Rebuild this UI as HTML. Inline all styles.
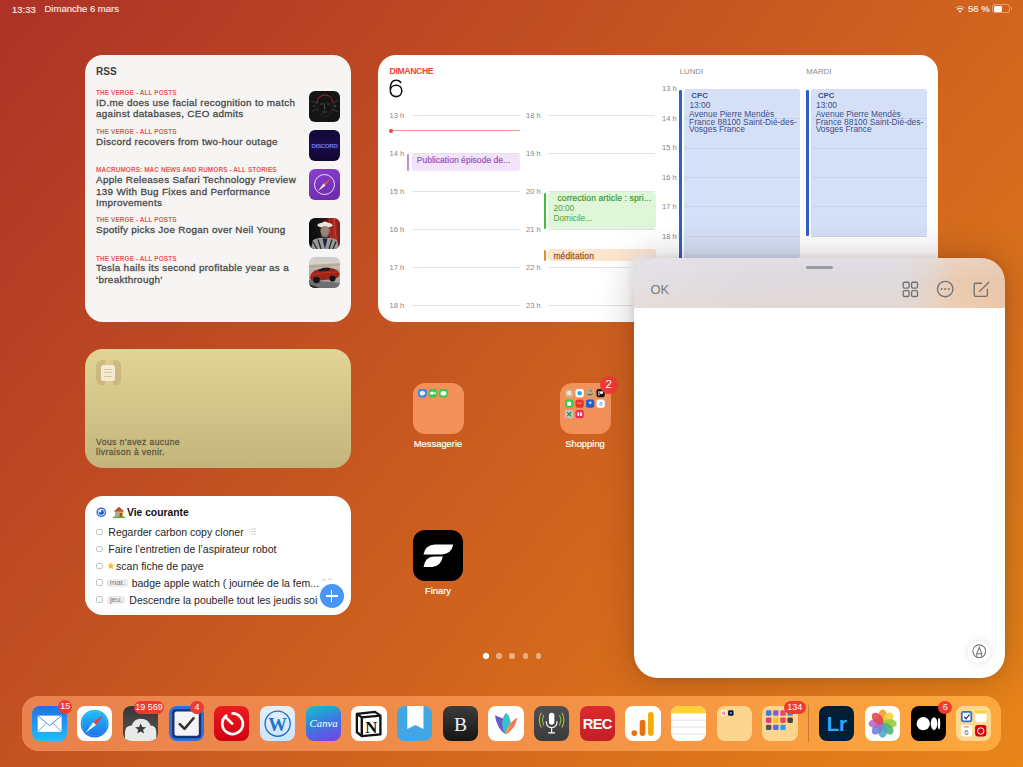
<!DOCTYPE html>
<html><head><meta charset="utf-8">
<style>
*{box-sizing:border-box;margin:0;padding:0}
html,body{width:1023px;height:767px;overflow:hidden}
body{position:relative;font-family:"Liberation Sans",sans-serif;
background:linear-gradient(130deg,rgb(173,50,39) 0%,rgb(231,133,24) 100%);}
.a{position:absolute;line-height:1;white-space:nowrap}
.w{position:absolute;border-radius:18px;overflow:hidden}
.src{left:11px;font-size:6.4px;font-weight:bold;color:#e25b5b;letter-spacing:.12px}
.ttl{left:11px;font-size:9.9px;color:#4a4a4a;line-height:11.4px;letter-spacing:.3px;-webkit-text-stroke:.3px #4a4a4a}
.cb{position:absolute;left:11.1px;width:6.7px;height:6.5px;border:1px solid #c4c4c4;border-radius:1.8px}
.tt{font-size:10.5px;color:#1e1e1e}
.tag{position:absolute;height:8.5px;border-radius:2px;background:#ececee;color:#7d7d7d;font-size:8px;line-height:8.5px;text-align:center;letter-spacing:-.1px}
.lbl{position:absolute;font-size:9.4px;color:#fff;-webkit-text-stroke:.2px #fff;line-height:1;white-space:nowrap;text-align:center;width:80px}
.ic{position:absolute;top:706px;width:35.3px;height:35.3px;border-radius:8px;overflow:hidden}
.bd{position:absolute;height:13.2px;border-radius:7px;background:#f2392f;color:#fff;font-size:9px;line-height:13.2px;text-align:center;white-space:nowrap}
.th{position:absolute;left:224px;width:31px;height:31px;border-radius:6px;overflow:hidden}
</style></head><body>

<!-- status bar -->
<div class="a" style="left:12px;top:4.6px;font-size:9.5px;color:#fbe9e2;-webkit-text-stroke:.15px #fbe9e2">13:33</div>
<div class="a" style="left:44.5px;top:4.2px;font-size:9.5px;color:#fbe9e2;-webkit-text-stroke:.15px #fbe9e2">Dimanche 6 mars</div>
<div class="a" style="left:968px;top:4.4px;font-size:9.5px;color:#fbe9e2;-webkit-text-stroke:.2px #fbe9e2">56 %</div>

<svg style="position:absolute;left:954.5px;top:5px" width="10" height="8" viewBox="0 0 10 8"><path d="M5 7.8 L3.4 5.9 Q5 4.6 6.6 5.9 Z" fill="#fbe9e2"/><path d="M2.1 4.5 Q5 2.2 7.9 4.5" fill="none" stroke="#fbe9e2" stroke-width="1.2"/><path d="M.6 2.9 Q5 -.6 9.4 2.9" fill="none" stroke="rgba(251,233,226,.45)" stroke-width="1.2"/></svg>
<div style="position:absolute;left:992px;top:4.3px;width:18.3px;height:9.2px;border-radius:2.6px;border:1px solid rgba(251,233,226,.45)"></div>
<div style="position:absolute;left:993.8px;top:6px;width:8.4px;height:5.8px;border-radius:1.2px;background:#fff"></div>
<div style="position:absolute;left:1010.8px;top:7.3px;width:1.2px;height:3.2px;border-radius:0 1px 1px 0;background:rgba(251,233,226,.45)"></div>

<!-- RSS widget -->
<div class="w" id="rss" style="left:85px;top:55px;width:266px;height:267px;background:#f6f5f3">
  <div class="a" style="left:11px;top:11.5px;font-size:10px;font-weight:bold;color:#3d3d3d">RSS</div>
  <div class="a src" style="top:34.6px">THE VERGE - ALL POSTS</div>
  <div class="a ttl" style="top:41.9px">ID.me does use facial recognition to match<br>against databases, CEO admits</div>
  <div class="a src" style="top:73.5px">THE VERGE - ALL POSTS</div>
  <div class="a ttl" style="top:80.8px">Discord recovers from two-hour outage</div>
  <div class="a src" style="top:112.3px">MACRUMORS: MAC NEWS AND RUMORS - ALL STORIES</div>
  <div class="a ttl" style="top:119.4px">Apple Releases Safari Technology Preview<br>139 With Bug Fixes and Performance<br>Improvements</div>
  <div class="a src" style="top:161.5px">THE VERGE - ALL POSTS</div>
  <div class="a ttl" style="top:168.6px">Spotify picks Joe Rogan over Neil Young</div>
  <div class="a src" style="top:201.2px">THE VERGE - ALL POSTS</div>
  <div class="a ttl" style="top:207.2px">Tesla hails its second profitable year as a<br>‘breakthrough’</div>
  <div class="th" style="top:36px;background:#151515"><svg width="31" height="31" viewBox="0 0 31 31"><path d="M8 12 Q9 4 16 4 Q23 4 24 12" fill="none" stroke="#b02a2a" stroke-width=".9"/><path d="M8 12 Q8 20 12 24 Q16 27 20 24 Q24 20 24 12" fill="none" stroke="#555" stroke-width=".6" stroke-dasharray="1 1"/><path d="M11 13 h3 M18 13 h3 M15.5 12 v7 M13 21 h5" stroke="#6a6a6a" stroke-width=".6"/><path d="M2 10 L8 12 M24 12 L30 9 M3 20 L9 18 M23 18 L29 21" stroke="#4a5a6a" stroke-width=".5"/><circle cx="26" cy="15" r=".8" fill="#5a7aa0"/><circle cx="5" cy="15" r=".8" fill="#a03030"/></svg></div>
  <div class="th" style="top:75px;background:linear-gradient(180deg,#12093a,#1b0c4a 50%,#120830)"><div class="a" style="left:0;top:12.5px;width:31px;text-align:center;font-size:6.2px;font-weight:bold;color:#6a78f0;letter-spacing:-.35px">DISCORD</div></div>
  <div class="th" style="top:113.5px;background:linear-gradient(160deg,#8b3fd0,#6a2aa8)"><svg width="31" height="31" viewBox="0 0 31 31"><circle cx="15.5" cy="15.5" r="10" fill="none" stroke="#e8dcf5" stroke-width="1"/><path d="M22 9 L16.5 16.5 L14.5 14.5 Z" fill="#e84a3a"/><path d="M9 22 L14.5 14.5 L16.5 16.5 Z" fill="#f3f0f5"/></svg></div>
  <div class="th" style="top:162.5px;background:linear-gradient(90deg,#0c0c0c 0%,#151515 35%,#6a1010 60%,#b02a20 80%,#7a1a18 100%)"><svg width="31" height="31" viewBox="0 0 31 31"><path d="M20 0 L23 31 M25 0 L28 31" stroke="#d04a3a" stroke-width="1.2" opacity=".6"/><ellipse cx="16" cy="7.2" rx="7.5" ry="2.6" fill="#e6e2da"/><path d="M11.5 6.5 Q16 0.5 20.5 6.5 Z" fill="#ece8e0"/><ellipse cx="16" cy="13" rx="4.6" ry="5" fill="#9a8478"/><path d="M12 14 Q16 21 20 14 L19.5 18 Q16 20.5 12.5 18 Z" fill="#7a7a7a"/><path d="M2 31 L4 22 Q10 19 16 20 Q22 19 28 22 L30 31 Z" fill="#9a9a9a"/><path d="M4 24 L8 31 M9 21.5 L12 31 M23 21.5 L20 31 M27 23.5 L24 31" stroke="#2a2a2a" stroke-width="1.3"/><path d="M13.5 20.5 L16 31 L18.5 20.5 Z" fill="#1a2540"/></svg></div>
  <div class="th" style="top:201.5px;background:linear-gradient(180deg,#c8ccd0 0%,#d8d2c4 22%,#b8b4ac 40%,#9a9a9a 100%)"><svg width="31" height="31" viewBox="0 0 31 31"><path d="M0 8 L31 6 L31 9 L0 11 Z" fill="#a89a80" opacity=".6"/><path d="M0 23 L0 31 L31 31 L31 26 Z" fill="#6f6f6f"/><path d="M1 20 Q2 14 9 12.5 Q17 10.5 24 11.5 Q30 13 30.5 17 Q30.5 21 25 22 L5 24 Q1 23.5 1 20 Z" fill="#9c2418"/><path d="M9 13 Q15 9.5 22 11 L20 13.5 L10.5 14.5 Z" fill="#1c1c22"/><path d="M2 18 Q12 15.5 29 15" stroke="#c83a2a" stroke-width=".8" fill="none"/><circle cx="7.5" cy="23" r="3.3" fill="#151515"/><circle cx="23.5" cy="21.5" r="3.1" fill="#151515"/><path d="M0 27 L10 31 L0 31 Z" fill="#222"/></svg></div>
</div>

<!-- Calendar widget -->
<div class="w" id="cal" style="left:378px;top:55px;width:560px;height:266.6px;background:#fff">
<div class="a" style="left:11.6px;top:12.2px;font-size:8.7px;font-weight:bold;color:#f0443a;letter-spacing:-.4px">DIMANCHE</div>
<svg style="position:absolute;left:11.4px;top:23.8px" width="14.5" height="19" viewBox="0 0 14.5 19"><path d="M12 4 Q10.8 1.2 7.1 1.2 C2.9 1.2 1.2 5 1.2 10.3 C1.2 15.2 3.5 17.6 7 17.6 C10.5 17.6 12.8 15.2 12.8 11.8 C12.8 8.5 10.5 6.3 7.1 6.3 C3.8 6.3 1.5 8.6 1.3 11.4" fill="none" stroke="#111" stroke-width="1.55"/></svg>
<div class="a" style="left:11.6px;top:56.5px;font-size:7.5px;color:#858585">13 h</div>
<div class="a" style="left:148.0px;top:56.5px;font-size:7.5px;color:#858585">18 h</div>
<div style="position:absolute;left:33.8px;top:59.8px;width:108.0px;height:1.0px;background:#e3e3e3"></div>
<div style="position:absolute;left:170.4px;top:59.8px;width:107.0px;height:1.0px;background:#e3e3e3"></div>
<div class="a" style="left:11.6px;top:94.5px;font-size:7.5px;color:#858585">14 h</div>
<div class="a" style="left:148.0px;top:94.5px;font-size:7.5px;color:#858585">19 h</div>
<div style="position:absolute;left:33.8px;top:97.8px;width:108.0px;height:1.0px;background:#e3e3e3"></div>
<div style="position:absolute;left:170.4px;top:97.8px;width:107.0px;height:1.0px;background:#e3e3e3"></div>
<div class="a" style="left:11.6px;top:132.5px;font-size:7.5px;color:#858585">15 h</div>
<div class="a" style="left:148.0px;top:132.5px;font-size:7.5px;color:#858585">20 h</div>
<div style="position:absolute;left:33.8px;top:135.8px;width:108.0px;height:1.0px;background:#e3e3e3"></div>
<div style="position:absolute;left:170.4px;top:135.8px;width:107.0px;height:1.0px;background:#e3e3e3"></div>
<div class="a" style="left:11.6px;top:170.7px;font-size:7.5px;color:#858585">16 h</div>
<div class="a" style="left:148.0px;top:170.7px;font-size:7.5px;color:#858585">21 h</div>
<div style="position:absolute;left:33.8px;top:174.0px;width:108.0px;height:1.0px;background:#e3e3e3"></div>
<div style="position:absolute;left:170.4px;top:174.0px;width:107.0px;height:1.0px;background:#e3e3e3"></div>
<div class="a" style="left:11.6px;top:208.7px;font-size:7.5px;color:#858585">17 h</div>
<div class="a" style="left:148.0px;top:208.7px;font-size:7.5px;color:#858585">22 h</div>
<div style="position:absolute;left:33.8px;top:212.0px;width:108.0px;height:1.0px;background:#e3e3e3"></div>
<div style="position:absolute;left:170.4px;top:212.0px;width:107.0px;height:1.0px;background:#e3e3e3"></div>
<div class="a" style="left:11.6px;top:246.7px;font-size:7.5px;color:#858585">18 h</div>
<div class="a" style="left:148.0px;top:246.7px;font-size:7.5px;color:#858585">23 h</div>
<div style="position:absolute;left:33.8px;top:250.0px;width:108.0px;height:1.0px;background:#e3e3e3"></div>
<div style="position:absolute;left:170.4px;top:250.0px;width:107.0px;height:1.0px;background:#e3e3e3"></div>
<div style="position:absolute;left:13.0px;top:75.1px;width:129.0px;height:1.0px;background:#f5958f"></div>
<div style="position:absolute;left:11px;top:73.6px;width:4px;height:4px;border-radius:50%;background:#f0443a"></div>
<div style="position:absolute;left:33.7px;top:98.8px;width:108.0px;height:17.5px;background:#f3e3f8;border-radius:3px"></div>
<div style="position:absolute;left:29.0px;top:99.1px;width:2.4px;height:17.0px;background:#c08ad8;border-radius:1.2px"></div>
<div class="a" style="left:38.7px;top:100.5px;font-size:8.5px;color:#9a52b8;letter-spacing:.04px;-webkit-text-stroke:.2px #9a52b8">Publication épisode de...</div>
<div style="position:absolute;left:169.9px;top:136.7px;width:107.7px;height:37.4px;background:#e0f6d9;border-radius:3px"></div>
<div style="position:absolute;left:165.5px;top:137.5px;width:2.6px;height:36.0px;background:#3cbf3c;border-radius:1.3px"></div>
<div class="a" style="left:179.4px;top:139.0px;font-size:8.5px;color:#3d9b30;letter-spacing:.13px;-webkit-text-stroke:.2px #3d9b30">correction article : spri...</div>
<div class="a" style="left:175.4px;top:149.3px;font-size:8.3px;color:#4aa63a">20:00</div>
<div class="a" style="left:175.4px;top:158.5px;font-size:8.3px;color:#4aa63a">Domicile...</div>
<div style="position:absolute;left:169.9px;top:193.9px;width:107.7px;height:12.5px;background:#fce6d0;border-radius:3px"></div>
<div style="position:absolute;left:165.5px;top:194.6px;width:2.6px;height:11.8px;background:#f08a1e;border-radius:1.3px"></div>
<div class="a" style="left:175.4px;top:196.8px;font-size:8.5px;color:#a0602e;letter-spacing:.14px;-webkit-text-stroke:.3px #a0602e">méditation</div>
<div class="a" style="left:301.7px;top:12.8px;font-size:7.8px;color:#8a8a8a">LUNDI</div>
<div class="a" style="left:428.2px;top:12.8px;font-size:7.8px;color:#8a8a8a">MARDI</div>
<div class="a" style="left:284.0px;top:30.4px;font-size:7.5px;color:#858585">13 h</div>
<div class="a" style="left:284.0px;top:59.8px;font-size:7.5px;color:#858585">14 h</div>
<div class="a" style="left:284.0px;top:89.4px;font-size:7.5px;color:#858585">15 h</div>
<div class="a" style="left:284.0px;top:118.6px;font-size:7.5px;color:#858585">16 h</div>
<div class="a" style="left:284.0px;top:148.2px;font-size:7.5px;color:#858585">17 h</div>
<div class="a" style="left:284.0px;top:177.8px;font-size:7.5px;color:#858585">18 h</div>
<div style="position:absolute;left:306.0px;top:34.0px;width:115.8px;height:169.0px;background:#d5e0f6;border-radius:2.5px"></div>
<div style="position:absolute;left:432.6px;top:34.0px;width:116.8px;height:147.0px;background:#d5e0f6;border-radius:2.5px"></div>
<div style="position:absolute;left:306.0px;top:63.4px;width:115.8px;height:1.0px;background:#c9d4ec"></div>
<div style="position:absolute;left:432.6px;top:63.4px;width:116.8px;height:1.0px;background:#c9d4ec"></div>
<div style="position:absolute;left:306.0px;top:92.8px;width:115.8px;height:1.0px;background:#c9d4ec"></div>
<div style="position:absolute;left:432.6px;top:92.8px;width:116.8px;height:1.0px;background:#c9d4ec"></div>
<div style="position:absolute;left:306.0px;top:122.0px;width:115.8px;height:1.0px;background:#c9d4ec"></div>
<div style="position:absolute;left:432.6px;top:122.0px;width:116.8px;height:1.0px;background:#c9d4ec"></div>
<div style="position:absolute;left:306.0px;top:151.4px;width:115.8px;height:1.0px;background:#c9d4ec"></div>
<div style="position:absolute;left:432.6px;top:151.4px;width:116.8px;height:1.0px;background:#c9d4ec"></div>
<div style="position:absolute;left:306.0px;top:181.0px;width:115.8px;height:1.0px;background:#c9d4ec"></div>
<div style="position:absolute;left:432.6px;top:181.0px;width:116.8px;height:1.0px;background:#c9d4ec"></div>
<div style="position:absolute;left:301.3px;top:34.5px;width:2.6px;height:169.0px;background:#2f5fcc;border-radius:1.3px"></div>
<div style="position:absolute;left:428.2px;top:34.5px;width:2.6px;height:146.0px;background:#2f5fcc;border-radius:1.3px"></div>
<div class="a" style="left:313.3px;top:36.7px;font-size:7.8px;font-weight:bold;color:#3a4f8a">CPC</div>
<div class="a" style="left:311.4px;top:45.6px;font-size:8.4px;color:#3a4f8a">13:00</div>
<div class="a" style="left:311.1px;top:56.2px;font-size:8.4px;color:#3a4f8a;line-height:7.6px;letter-spacing:0px">Avenue Pierre Mendès<br>France 88100 Saint-Dié-des-<br>Vosges France</div>
<div class="a" style="left:439.9px;top:36.7px;font-size:7.8px;font-weight:bold;color:#3a4f8a">CPC</div>
<div class="a" style="left:438.0px;top:45.6px;font-size:8.4px;color:#3a4f8a">13:00</div>
<div class="a" style="left:437.7px;top:56.2px;font-size:8.4px;color:#3a4f8a;line-height:7.6px;letter-spacing:0px">Avenue Pierre Mendès<br>France 88100 Saint-Dié-des-<br>Vosges France</div>
</div>

<!-- Delivery widget -->
<div class="w" id="dl" style="left:85px;top:349px;width:266px;height:119px;background:linear-gradient(180deg,#e1d494 0%,#d3c588 50%,#c3b47c 100%)">
  <div style="position:absolute;left:11px;top:11px;width:25px;height:25px;border-radius:6px;background:#cbb97e"></div>
  <div style="position:absolute;left:19.5px;top:11px;width:8px;height:25px;background:#dccb8c"></div>
  <div style="position:absolute;left:15.8px;top:16px;width:14.5px;height:15.7px;border-radius:2.5px;background:#f4e9d2"></div>
  <div style="position:absolute;left:18.5px;top:19.5px;width:8px;height:1.2px;background:#d8c49a;box-shadow:0 3px 0 #d8c49a,0 7px 0 #d8c49a"></div>
  <div class="a" style="left:11.1px;top:88.1px;font-size:8.6px;color:#615a3f;line-height:10.2px;letter-spacing:.39px;-webkit-text-stroke:.3px #615a3f">Vous n’avez aucune<br>livraison à venir.</div>
</div>

<!-- Todo widget -->
<div class="w" id="todo" style="left:85px;top:496px;width:266px;height:119px;background:#fff">
  <svg style="position:absolute;left:10.6px;top:11.1px" width="10.5" height="10.5" viewBox="0 0 10 10"><circle cx="5" cy="5" r="4.6" fill="#3d74dc"/><circle cx="5" cy="5" r="3.2" fill="#fff"/><circle cx="5" cy="5" r="2.5" fill="#2356b8"/><path d="M5 5 L5 2.5 A2.5 2.5 0 0 0 2.5 5 Z" fill="#fff"/></svg>
  <svg style="position:absolute;left:27.9px;top:10px" width="12" height="12" viewBox="0 0 12 12"><path d="M6 .8 L11.2 5.6 L10 5.6 L10 11 L2 11 L2 5.6 L.8 5.6 Z" fill="#e8a25a"/><path d="M6 .8 L11.2 5.6 L.8 5.6 Z" fill="#b8503a"/><rect x="3" y="7" width="2.4" height="2.4" fill="#6fb6e8"/><rect x="6.6" y="7" width="2.4" height="4" fill="#8a5a3a"/><rect x="0" y="10.6" width="12" height="1.4" fill="#5aa840"/></svg>
  <div class="a" style="left:42px;top:11.7px;font-size:10.3px;font-weight:bold;color:#111">Vie courante</div>
  <div class="cb" style="top:32.7px"></div><div class="a tt" style="left:23.3px;top:31.0px">Regarder carbon copy cloner</div>
  <svg style="position:absolute;left:164px;top:32px" width="7" height="7" viewBox="0 0 7 7"><path d="M0 1h1M2 1h5M0 3.5h1M2 3.5h5M0 6h1M2 6h5" stroke="#c9c9c9" stroke-width=".8"/></svg>
  <div class="cb" style="top:49.6px"></div><div class="a tt" style="left:23.3px;top:47.9px">Faire l’entretien de l’aspirateur robot</div>
  <div class="cb" style="top:66.5px"></div>
  <svg style="position:absolute;left:22.4px;top:66.3px" width="7.6" height="7.6" viewBox="0 0 10 10"><path d="M5 .3 L6.4 3.4 L9.8 3.7 L7.2 6 L8 9.5 L5 7.7 L2 9.5 L2.8 6 L.2 3.7 L3.6 3.4 Z" fill="#f5c02a"/></svg>
  <div class="a tt" style="left:31.1px;top:64.8px">scan fiche de paye</div>
  <div class="cb" style="top:83.4px"></div>
  <div class="tag" style="left:21.9px;top:82.7px;width:20.8px">mar.</div>
  <div class="a tt" style="left:46.7px;top:81.7px;width:187px;overflow:hidden;padding-bottom:3px">badge apple watch ( journée de la fem...</div>
  <svg style="position:absolute;left:236px;top:80px" width="12" height="6" viewBox="0 0 12 6"><path d="M1 5 Q3 1 5 5 M7 4 Q9 1 11 4" stroke="#c8c8c8" stroke-width="1" fill="none"/></svg>
  <div class="cb" style="top:100.3px"></div>
  <div class="tag" style="left:21.9px;top:99.6px;width:18.5px">jeu.</div>
  <div class="a tt" style="left:44.3px;top:98.6px;width:189px;overflow:hidden;padding-bottom:3px">Descendre la poubelle tout les jeudis soir</div>
  <div style="position:absolute;left:234.8px;top:88px;width:23.8px;height:23.8px;border-radius:50%;background:#4a96f4"></div>
  <div style="position:absolute;left:240.8px;top:99.1px;width:11.8px;height:1.6px;background:#fff"></div>
  <div style="position:absolute;left:245.9px;top:94px;width:1.6px;height:11.8px;background:#fff"></div>
</div>


<!-- home icons -->
<div style="position:absolute;left:412.5px;top:383.3px;width:51px;height:51.2px;border-radius:12px;background:#f4905a"></div>
<svg style="position:absolute;left:418px;top:389px" width="30" height="9" viewBox="0 0 30 9">
 <rect x="0" y="0" width="8.8" height="8.5" rx="2.4" fill="#3d83f2"/><ellipse cx="4.4" cy="4.2" rx="2.6" ry="2.3" fill="#fff"/>
 <rect x="10.6" y="0" width="8.5" height="8.5" rx="2.4" fill="#3cc84a"/><rect x="12.3" y="2.8" width="3.4" height="2.8" rx=".6" fill="#fff"/><path d="M15.7 4.2 L17.6 2.8 L17.6 5.6 Z" fill="#fff"/>
 <rect x="21.1" y="0" width="8.6" height="8.5" rx="2.4" fill="#3cc84a"/><ellipse cx="25.4" cy="4.2" rx="2.9" ry="2.3" fill="#fff"/>
</svg>
<div class="lbl" style="left:398px;top:439px">Messagerie</div>

<div style="position:absolute;left:560px;top:383.1px;width:50.6px;height:51.2px;border-radius:12px;background:#f4915a"></div>
<svg style="position:absolute;left:565px;top:388.8px" width="40.5" height="30" viewBox="0 0 40.5 30">
 <rect x="0" y="0" width="8.3" height="8.3" rx="2.2" fill="#cdb48a"/><rect x="2" y="2" width="4.3" height="4.3" rx="1" fill="#efe6d8"/>
 <rect x="10.5" y="0" width="8.3" height="8.3" rx="2.2" fill="#fff"/><rect x="12.6" y="2.2" width="4" height="4" rx="1" fill="#2aa4e8"/>
 <rect x="21" y="0" width="8.3" height="8.3" rx="2.2" fill="#c9a77a"/><path d="M22.5 5 Q25 7 27.8 5" stroke="#333" stroke-width=".8" fill="none"/><path d="M24 1 L26 3.2 L27 .8 Z" fill="#2a8ef0"/>
 <rect x="31.5" y="0" width="8.3" height="8.3" rx="2.2" fill="#111"/><circle cx="36.5" cy="3.6" r="1.6" fill="#fff"/><rect x="33.4" y="2" width="1" height="4.5" fill="#fff"/>
 <rect x="0" y="10.5" width="8.3" height="8.3" rx="2.2" fill="#3cc84a"/><rect x="2.3" y="12.7" width="3.8" height="4" fill="#fff"/>
 <rect x="10.5" y="10.5" width="8.3" height="8.3" rx="2.2" fill="#e2362a"/><path d="M12.3 13.5 Q14.6 16 17 13.5" stroke="#f7b27a" stroke-width=".8" fill="none"/>
 <rect x="21" y="10.5" width="8.3" height="8.3" rx="2.2" fill="#1f5fcf"/><path d="M25.2 12.3 v3 M23.7 13.8 h3" stroke="#fff" stroke-width=".8"/>
 <rect x="31.5" y="10.5" width="8.3" height="8.3" rx="2.2" fill="#fff"/><text x="35.6" y="17.3" font-size="6" fill="#3a9ef0" text-anchor="middle" font-family="Liberation Sans">8</text>
 <rect x="0" y="21" width="8.3" height="8.3" rx="2.2" fill="#c6c6c6"/><path d="M2 23 L6.3 27.3 M6.3 23 L2 27.3" stroke="#2e8a3a" stroke-width="1.1"/>
 <rect x="10.5" y="21" width="8.3" height="8.3" rx="2.2" fill="#ea2a5a"/><rect x="12.4" y="23.3" width="1.7" height="3.6" rx=".4" fill="#fff"/><rect x="15.2" y="23.3" width="1.7" height="3.6" rx=".4" fill="#fff"/>
</svg>
<div style="position:absolute;left:599.8px;top:376.1px;width:18px;height:17.7px;border-radius:50%;background:#f03b33"></div>
<div class="a" style="left:599.8px;top:378.6px;width:18px;text-align:center;font-size:11.5px;color:#fff">2</div>
<div class="lbl" style="left:545px;top:439.4px">Shopping</div>

<div style="position:absolute;left:412.8px;top:529.9px;width:50.6px;height:51.1px;border-radius:12px;background:#000"></div>
<svg style="position:absolute;left:412.8px;top:529.9px" width="50.6" height="51.1" viewBox="0 0 50.6 51.1">
 <path d="M10.5 24.5 Q12 15 22 14.6 L40.2 14.6 Q38.5 24 29 24.5 Z" fill="#fff"/>
 <path d="M10.5 36.9 Q12 27 21 26.6 L29.8 26.6 Q28 36.4 19 36.9 Z" fill="#fff"/>
</svg>
<div class="lbl" style="left:398px;top:586.3px">Finary</div>

<!-- page dots -->
<div style="position:absolute;left:483.25px;top:653.1px;width:5.5px;height:5.5px;border-radius:50%;background:#fff"></div>
<div style="position:absolute;left:496.45px;top:653.1px;width:5.5px;height:5.5px;border-radius:50%;background:rgba(255,235,215,.55)"></div>
<div style="position:absolute;left:509.45px;top:653.1px;width:5.5px;height:5.5px;border-radius:50%;background:rgba(255,235,215,.55)"></div>
<div style="position:absolute;left:522.65px;top:653.1px;width:5.5px;height:5.5px;border-radius:50%;background:rgba(255,235,215,.55)"></div>
<div style="position:absolute;left:535.65px;top:653.1px;width:5.5px;height:5.5px;border-radius:50%;background:rgba(255,235,215,.55)"></div>

<div style="position:absolute;left:634px;top:258px;width:370.5px;height:419.5px;border-radius:24px;box-shadow:0 0 36px rgba(40,20,15,.26),0 0 6px rgba(60,25,10,.12)"></div>
<div style="position:absolute;left:630px;top:256px;width:30px;height:34px;border-radius:8px;background:#e3e0e3;filter:blur(3px)"></div>
<!-- Notes panel -->
<div id="notes" style="position:absolute;left:634px;top:258px;width:370.5px;height:419.5px;border-radius:24px;overflow:hidden">
  <div style="position:absolute;left:0;top:50px;width:371px;height:370px;background:#fff"></div>
  <div style="position:absolute;left:0;top:0;width:371px;height:50px;background:linear-gradient(90deg,#e2dfe2 0%,#dcd9dd 30%,#ddd8da 72%,#e2d2c6 80%,#e9c7a8 87%,#eac2a0 100%)"></div>
  <div style="position:absolute;left:0;top:0;width:371px;height:50px;background:linear-gradient(180deg,rgba(235,235,248,.35) 0%,rgba(235,232,240,.1) 45%,rgba(245,215,195,.28) 100%)"></div>
  <div style="position:absolute;left:171.7px;top:7.6px;width:27px;height:3.4px;border-radius:2px;background:#9b9b9c"></div>
  <div class="a" style="left:16.6px;top:25.6px;font-size:12.9px;color:#7a7a7a">OK</div>
  <svg style="position:absolute;left:268px;top:22.5px" width="17" height="17" viewBox="0 0 17 17" fill="none" stroke="#727272" stroke-width="1.35"><rect x="1.2" y="1.2" width="5.9" height="5.9" rx="1.3"/><rect x="9.6" y="1.2" width="5.9" height="5.9" rx="1.3"/><rect x="1.2" y="9.6" width="5.9" height="5.9" rx="1.3"/><rect x="9.6" y="9.6" width="5.9" height="5.9" rx="1.3"/></svg>
  <svg style="position:absolute;left:301.5px;top:21.8px" width="18" height="18" viewBox="0 0 18 18"><circle cx="9.2" cy="9" r="7.7" fill="none" stroke="#727272" stroke-width="1.35"/><circle cx="5.6" cy="9" r="1" fill="#727272"/><circle cx="9.2" cy="9" r="1" fill="#727272"/><circle cx="12.8" cy="9" r="1" fill="#727272"/></svg>
  <svg style="position:absolute;left:338.5px;top:22.5px" width="17" height="17" viewBox="0 0 17 17" fill="none" stroke="#727272" stroke-width="1.35" stroke-linecap="round"><path d="M8.5 2.2 H2.8 Q1.2 2.2 1.2 3.8 V13.8 Q1.2 15.4 2.8 15.4 H12.8 Q14.4 15.4 14.4 13.8 V8.2"/><path d="M6.5 10.4 L15.8 1.2"/></svg>
  <div style="position:absolute;left:334px;top:383px;width:21.5px;height:21.5px;border-radius:50%;background:#fff;box-shadow:0 0 8px rgba(0,0,0,.12)"></div>
  <svg style="position:absolute;left:337.7px;top:386.3px" width="14.5" height="14.5" viewBox="0 0 14.5 14.5" fill="none" stroke="#7a7a7a" stroke-width="1.1"><circle cx="7.25" cy="7.25" r="6.4"/><path d="M4.6 13.2 L4.9 9.2 L7.25 3.4 L9.6 9.2 L9.9 13.2 M4.9 9.2 Q7.25 10.6 9.6 9.2"/></svg>
</div>

<!-- Dock -->
<div id="dock" style="position:absolute;left:22px;top:696px;width:979px;height:55px;border-radius:16px;background:linear-gradient(90deg,#e8824f 0%,#f28f48 49%,#fda83c 100%)"></div>
<div class="ic" style="left:31.5px;background:linear-gradient(180deg,#1f6fef,#22bdf8);"><svg width="35.3" height="35.3" viewBox="0 0 36 36" style="position:absolute;left:0;top:0"><rect x="5.8" y="9.8" width="24.4" height="16.6" fill="#fff"/><path d="M5.8 9.8 L18 20 L30.2 9.8" fill="none" stroke="#3a8ff0" stroke-width="1"/><path d="M5.8 26.4 L14.5 17.5 M30.2 26.4 L21.5 17.5" stroke="#3a8ff0" stroke-width=".8"/></svg></div>
<div class="ic" style="left:77.2px;background:#fff;"><svg width="35.3" height="35.3" viewBox="0 0 36 36" style="position:absolute;left:0;top:0"><circle cx="18" cy="18" r="14.2" fill="url(#sg)"/><defs><linearGradient id="sg" x1="0" y1="0" x2="0" y2="1"><stop offset="0" stop-color="#1fc3f8"/><stop offset="1" stop-color="#1f6fe6"/></linearGradient></defs><circle cx="18" cy="18" r="12.5" fill="none" stroke="#cfe8fb" stroke-width=".6" stroke-dasharray=".6 1.4"/><path d="M27 9 L19.4 19.4 L16.6 16.6 Z" fill="#f23c34"/><path d="M9 27 L16.6 16.6 L19.4 19.4 Z" fill="#fff"/></svg></div>
<div class="ic" style="left:122.9px;background:linear-gradient(180deg,#353535 0%,#4a4a4a 55%,#3b3b3b 100%);"><svg width="35.3" height="35.3" viewBox="0 0 36 36" style="position:absolute;left:0;top:0"><path d="M2 36 L2 27 Q2 20 9 20 Q11 13 18 13 Q26 13 28 20 Q34 20 34 27 L34 36 Z" fill="#e9e9ea"/><path d="M18 17.5 L19.6 21.3 L23.6 21.6 L20.5 24.1 L21.5 28 L18 25.9 L14.5 28 L15.5 24.1 L12.4 21.6 L16.4 21.3 Z" fill="#3c3c3c"/></svg></div>
<div class="ic" style="left:168.5px;background:#2f6fe0;"><svg width="35.3" height="35.3" viewBox="0 0 36 36" style="position:absolute;left:0;top:0"><rect x="3.2" y="3.2" width="29.6" height="29.6" rx="4" fill="#17326e"/><rect x="5.6" y="5.6" width="24.8" height="24.8" rx="2" fill="#f4f4f6"/><path d="M11 18.5 L15.8 23.3 L25 12.5" fill="none" stroke="#333" stroke-width="2.6" stroke-linecap="round" stroke-linejoin="round"/></svg></div>
<div class="ic" style="left:214.2px;background:linear-gradient(180deg,#ee1c22,#cf0010);"><svg width="35.3" height="35.3" viewBox="0 0 36 36" style="position:absolute;left:0;top:0"><path d="M12.5 9.8 A10.5 10.5 0 1 0 19 7.6" fill="none" stroke="#fff" stroke-width="2.8" stroke-linecap="round"/><path d="M12 11.5 L18.5 18" stroke="#fff" stroke-width="2.8" stroke-linecap="round"/></svg></div>
<div class="ic" style="left:259.9px;background:linear-gradient(180deg,#e3f0fb,#cfe4f8);"><svg width="35.3" height="35.3" viewBox="0 0 36 36" style="position:absolute;left:0;top:0"><circle cx="18" cy="18" r="12.8" fill="none" stroke="#1e73c8" stroke-width="1.4"/><text x="18" y="25" font-family="Liberation Serif" font-weight="bold" font-size="19" fill="#1e73c8" text-anchor="middle">W</text></svg></div>
<div class="ic" style="left:305.6px;background:linear-gradient(160deg,#12c2cf 0%,#3a7ae0 50%,#7a3de8 100%);"><svg width="35.3" height="35.3" viewBox="0 0 36 36" style="position:absolute;left:0;top:0"><text x="18" y="21.5" font-family="Liberation Serif" font-style="italic" font-size="11" fill="#fff" text-anchor="middle">Canva</text></svg></div>
<div class="ic" style="left:351.3px;background:#fff;"><svg width="35.3" height="35.3" viewBox="0 0 36 36" style="position:absolute;left:0;top:0"><path d="M6 8 L24.5 6 L30 9.8 L30 29 L11 30.8 L6 26.8 Z" fill="#fff" stroke="#111" stroke-width="2.4" stroke-linejoin="round"/><path d="M6 8 L11 11.6 L30 9.8 M11 11.6 L11 30.8" fill="none" stroke="#111" stroke-width="2.4"/><text x="20.6" y="27.5" font-family="Liberation Serif" font-weight="bold" font-size="17" fill="#111" text-anchor="middle">N</text></svg></div>
<div class="ic" style="left:396.9px;background:#42a6e6;"><svg width="35.3" height="35.3" viewBox="0 0 36 36" style="position:absolute;left:0;top:0"><path d="M10.5 0 L27 0 L27 23.5 L18.75 19.5 L10.5 23.5 Z" fill="#fff"/></svg></div>
<div class="ic" style="left:442.6px;background:linear-gradient(180deg,#3c3c3c,#151515);"><svg width="35.3" height="35.3" viewBox="0 0 36 36" style="position:absolute;left:0;top:0"><text x="18" y="26" font-family="Liberation Serif" font-size="20" fill="#f2f2f2" text-anchor="middle">B</text></svg></div>
<div class="ic" style="left:488.3px;background:#fff;"><svg width="35.3" height="35.3" viewBox="0 0 36 36" style="position:absolute;left:0;top:0"><path d="M7 9.5 L16 13 Q18 20 17.5 28.5 Q9 23 7 9.5 Z" fill="#6a5ad0"/><path d="M18.5 7 Q23 11 23 17.5 Q22.5 24 18 29 Q14 23 14.5 16 Q15.5 10 18.5 7 Z" fill="#3cc0c8"/><path d="M30 12 Q27.5 24 18 29 Q19.5 17.5 30 12 Z" fill="#f27a5a"/><path d="M18 29 Q19 22 24 17.5 Q21 24 18 29 Z" fill="#f5b04a"/></svg></div>
<div class="ic" style="left:534.0px;background:linear-gradient(180deg,#505050,#3a3a3a);"><svg width="35.3" height="35.3" viewBox="0 0 36 36" style="position:absolute;left:0;top:0"><rect x="15.2" y="7" width="5.6" height="12" rx="2.8" fill="#fff"/><path d="M12.5 15.5 Q12.5 22 18 22 Q23.5 22 23.5 15.5 M18 22 L18 27.5 M14.5 27.5 L21.5 27.5" fill="none" stroke="#fff" stroke-width="1.2"/><path d="M10 9 Q7 14 10 20 M26 9 Q29 14 26 20" fill="none" stroke="#9bd04a" stroke-width="1"/><path d="M7.5 7 Q3.5 14 7.5 22 M28.5 7 Q32.5 14 28.5 22" fill="none" stroke="#d8c84a" stroke-width="1"/></svg></div>
<div class="ic" style="left:579.7px;background:linear-gradient(180deg,#db2a30,#c31e26);"><svg width="35.3" height="35.3" viewBox="0 0 36 36" style="position:absolute;left:0;top:0"><text x="17.6" y="23.6" font-family="Liberation Sans" font-weight="bold" font-size="15" fill="#fff" text-anchor="middle" letter-spacing="-.6">REC</text></svg></div>
<div class="ic" style="left:625.3px;background:#fff;"><svg width="35.3" height="35.3" viewBox="0 0 36 36" style="position:absolute;left:0;top:0"><rect x="23.5" y="6" width="5.8" height="24.5" rx="2.9" fill="#f7ab00"/><rect x="15" y="14" width="5.8" height="16.5" rx="2.9" fill="#e8710a"/><circle cx="9.5" cy="27.6" r="2.9" fill="#e8710a"/></svg></div>
<div class="ic" style="left:671.0px;background:#fff;"><svg width="35.3" height="35.3" viewBox="0 0 36 36" style="position:absolute;left:0;top:0"><rect x="0" y="0" width="36" height="7.5" fill="#fcd13a"/><path d="M0 14.5 H36 M0 21.5 H36 M0 28.5 H36" stroke="#d5d5d5" stroke-width=".7"/></svg></div>
<div class="ic" style="left:716.7px;background:#fcd58e;"><svg width="35.3" height="35.3" viewBox="0 0 36 36" style="position:absolute;left:0;top:0"><rect x="4.0" y="4.4" width="5.6" height="5.6" rx="1.4" fill="#fff"/><circle cx="6.8" cy="7.2" r="1.9" fill="#e8a" /><circle cx="6.8" cy="7.2" r="1" fill="#fb4"/><rect x="11.3" y="4.4" width="5.6" height="5.6" rx="1.4" fill="#0a1b3a"/><circle cx="14.1" cy="7.2" r="1.1" fill="#5ab0f0"/></svg></div>
<div class="ic" style="left:762.4px;background:#fcd58e;"><svg width="35.3" height="35.3" viewBox="0 0 36 36" style="position:absolute;left:0;top:0"><rect x="4.0" y="4.4" width="5.6" height="5.6" rx="1.4" fill="#3a7de0"/><rect x="11.3" y="4.4" width="5.6" height="5.6" rx="1.4" fill="#8a5ad8"/><rect x="18.6" y="4.4" width="5.6" height="5.6" rx="1.4" fill="#e8447a"/><rect x="25.9" y="4.4" width="5.6" height="5.6" rx="1.4" fill="#3a8ae0"/><rect x="4.0" y="11.7" width="5.6" height="5.6" rx="1.4" fill="#d8407a"/><rect x="11.3" y="11.7" width="5.6" height="5.6" rx="1.4" fill="#f0c030"/><rect x="18.6" y="11.7" width="5.6" height="5.6" rx="1.4" fill="#e84a5a"/><rect x="25.9" y="11.7" width="5.6" height="5.6" rx="1.4" fill="#444"/><rect x="4.0" y="19.0" width="5.6" height="5.6" rx="1.4" fill="#555"/><rect x="11.3" y="19.0" width="5.6" height="5.6" rx="1.4" fill="#5a6ad8"/><rect x="18.6" y="19.0" width="5.6" height="5.6" rx="1.4" fill="#2aa0f0"/></svg></div>
<div class="ic" style="left:819.1px;background:#001e36;"><svg width="35.3" height="35.3" viewBox="0 0 36 36" style="position:absolute;left:0;top:0"><text x="18" y="25.2" font-family="Liberation Sans" font-weight="bold" font-size="21" fill="#31a8ff" text-anchor="middle" letter-spacing="-.5">Lr</text></svg></div>
<div class="ic" style="left:864.8px;background:#fff;"><svg width="35.3" height="35.3" viewBox="0 0 36 36" style="position:absolute;left:0;top:0"><ellipse cx="18" cy="10.8" rx="4.6" ry="7.2" fill="#f39a2b" fill-opacity=".88" transform="rotate(0 18 18)"/><ellipse cx="18" cy="10.8" rx="4.6" ry="7.2" fill="#f5cf3a" fill-opacity=".88" transform="rotate(45 18 18)"/><ellipse cx="18" cy="10.8" rx="4.6" ry="7.2" fill="#9bcb3c" fill-opacity=".88" transform="rotate(90 18 18)"/><ellipse cx="18" cy="10.8" rx="4.6" ry="7.2" fill="#4db56a" fill-opacity=".88" transform="rotate(135 18 18)"/><ellipse cx="18" cy="10.8" rx="4.6" ry="7.2" fill="#4aa7c8" fill-opacity=".88" transform="rotate(180 18 18)"/><ellipse cx="18" cy="10.8" rx="4.6" ry="7.2" fill="#6f7fd6" fill-opacity=".88" transform="rotate(225 18 18)"/><ellipse cx="18" cy="10.8" rx="4.6" ry="7.2" fill="#b36ac3" fill-opacity=".88" transform="rotate(270 18 18)"/><ellipse cx="18" cy="10.8" rx="4.6" ry="7.2" fill="#e0474f" fill-opacity=".88" transform="rotate(315 18 18)"/></svg></div>
<div class="ic" style="left:910.5px;background:#000;"><svg width="35.3" height="35.3" viewBox="0 0 36 36" style="position:absolute;left:0;top:0"><ellipse cx="12.5" cy="18" rx="6.8" ry="6.8" fill="#fff"/><ellipse cx="23.5" cy="18" rx="3.4" ry="6.4" fill="#fff"/><ellipse cx="28.6" cy="18" rx="1.2" ry="5.8" fill="#fff"/></svg></div>
<div class="ic" style="left:956.2px;background:#fcd990;"><svg width="35.3" height="35.3" viewBox="0 0 36 36" style="position:absolute;left:0;top:0"><rect x="5" y="5" width="11.5" height="11.5" rx="2.5" fill="#2f6fe0"/><rect x="6.8" y="6.8" width="7.9" height="7.9" rx="1" fill="#fff"/><path d="M8.3 11 L10.3 13 L13.8 8.5" fill="none" stroke="#333" stroke-width="1.2"/><rect x="19.5" y="5" width="11.5" height="11.5" rx="2.5" fill="#fff"/><rect x="19.5" y="5" width="11.5" height="2.8" fill="#fcd13a"/><rect x="5" y="19.5" width="11.5" height="11.5" rx="2.5" fill="#fff"/><text x="10.75" y="29.5" font-family="Liberation Sans" font-size="8" fill="#666" text-anchor="middle">6</text><rect x="8" y="20.8" width="5" height="1" fill="#f55"/><rect x="19.5" y="19.5" width="11.5" height="11.5" rx="2.5" fill="#d8000f"/><circle cx="25.25" cy="25.5" r="3.3" fill="none" stroke="#fff" stroke-width="1"/></svg></div>
<div style="position:absolute;left:808px;top:705px;width:1px;height:37px;background:rgba(150,80,20,.45)"></div>
<div class="bd" style="left:58.2px;top:700.4px;width:14px">15</div><div class="bd" style="left:133.8px;top:700.9px;width:30.2px">19 569</div><div class="bd" style="left:190px;top:700.5px;width:14px">4</div><div class="bd" style="left:784px;top:700.5px;width:21.5px">134</div><div class="bd" style="left:938.4px;top:700.5px;width:13.5px">6</div>
</body></html>
